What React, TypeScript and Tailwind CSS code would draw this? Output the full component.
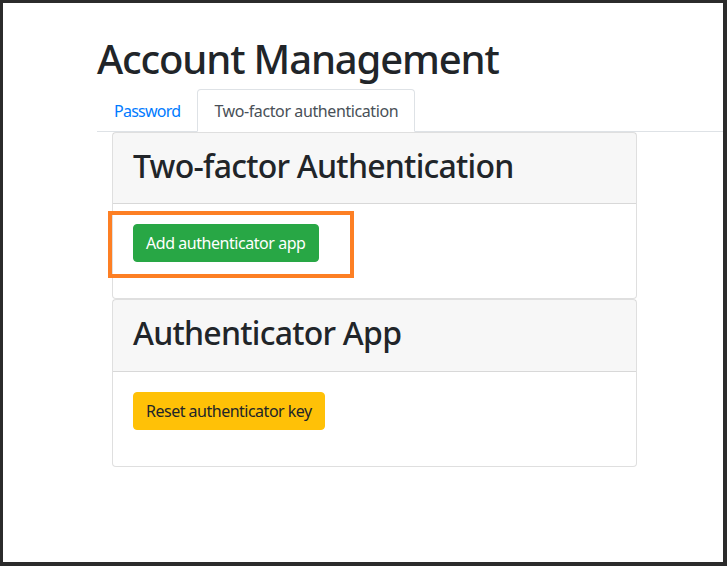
const font = "font-['Segoe_UI','Noto_Sans',sans-serif]";

function Card({ title, children }: { title: string; children: React.ReactNode }) {
  return (
    <div className="rounded-[4px] border border-[rgba(0,0,0,0.125)] bg-white">
      <div className="border-b border-[rgba(0,0,0,0.125)] bg-[rgba(0,0,0,0.03)] px-5 py-3">
        <h2 className="mb-[6px] pt-[2px] text-[32px] font-medium leading-[1.2] tracking-[-0.75px] text-[#212529]">{title}</h2>
      </div>
      <div className="p-5">{children}</div>
    </div>
  );
}

export default function App() {
  return (
    <div
      className={`h-[566px] w-[727px] overflow-hidden border-t-[3px] border-l-[3px] border-r-4 border-b-4 border-[#2b2b2b] bg-white text-[#212529] ${font}`}
    >
      <div className="pl-[94px] pt-[30px]">
        <h1 className="mb-[6px] pt-[2px] text-[40px] font-medium leading-[1.2] tracking-[-1.15px]">Account Management</h1>

        {/* Tabs */}
        <div className="flex border-b border-[#dee2e6] text-base leading-6 tracking-[-0.4px]">
          <span className="border border-transparent px-4 pt-[9px] pb-[7px] tracking-[-0.75px] text-[#007bff]">Password</span>
          <span className="-mb-px rounded-t-[4px] border border-[#dee2e6] border-b-white bg-white px-4 pt-[9px] pb-[7px] text-[#495057]">
            Two-factor authentication
          </span>
        </div>

        <div className="ml-[15px] w-[525px]">
          <Card title="Two-factor Authentication">
            <div className="relative mb-4 inline-block">
              <button className="rounded-[4px] border border-[#28a745] bg-[#28a745] px-3 py-1.5 text-base leading-6 tracking-[-0.45px] text-white">
                Add authenticator app
              </button>
              <span className="pointer-events-none absolute -top-[13px] -bottom-[16px] -left-[25px] -right-[35px] border-4 border-[#fd7f24]" />
            </div>
          </Card>
          <Card title="Authenticator App">
            <button className="mb-4 rounded-[4px] border border-[#ffc107] bg-[#ffc107] px-3 py-1.5 text-base leading-6 tracking-[-0.5px] text-[#212529]">
              Reset authenticator key
            </button>
          </Card>
        </div>
      </div>
    </div>
  );
}
